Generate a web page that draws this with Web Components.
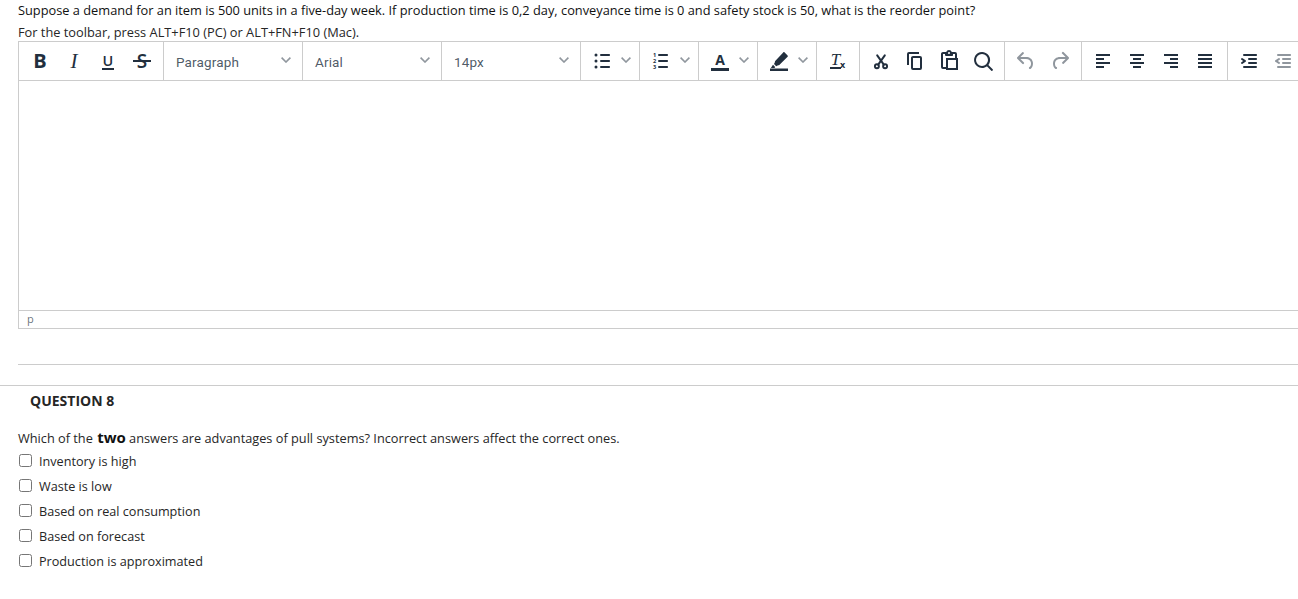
<!DOCTYPE html>
<html lang="en"><head><meta charset="utf-8"><title>Question</title>
<style>
html,body{margin:0;padding:0;background:#fff;overflow:hidden;height:599px;font-family:"Open Sans",sans-serif;color:#111}
</style></head><body>
<question-block></question-block>
<rich-editor></rich-editor>
<section-divider></section-divider>
<question-head>QUESTION 8</question-head>
<question-prompt>Which of the <b>two</b> answers are advantages of pull systems? Incorrect answers affect the correct ones.</question-prompt>
<answer-option>Inventory is high</answer-option>
<answer-option>Waste is low</answer-option>
<answer-option>Based on real consumption</answer-option>
<answer-option>Based on forecast</answer-option>
<answer-option>Production is approximated</answer-option>
<script>
const ICONS={
 bull:'<path d="M11 5h8c.6 0 1 .4 1 1s-.4 1-1 1h-8a1 1 0 010-2zm0 6h8c.6 0 1 .4 1 1s-.4 1-1 1h-8a1 1 0 010-2zm0 6h8c.6 0 1 .4 1 1s-.4 1-1 1h-8a1 1 0 010-2z"/><circle cx="6" cy="6" r="1.5"/><circle cx="6" cy="12" r="1.5"/><circle cx="6" cy="18" r="1.5"/>',
 num:'<path d="M10 17h8c.6 0 1 .4 1 1s-.4 1-1 1h-8a1 1 0 010-2zm0-6h8c.6 0 1 .4 1 1s-.4 1-1 1h-8a1 1 0 010-2zm0-6h8c.6 0 1 .4 1 1s-.4 1-1 1h-8a1 1 0 110-2z"/><g font-family="Open Sans" font-size="5.6" font-weight="700" text-anchor="middle"><text x="5.5" y="8">1</text><text x="5.5" y="14">2</text><text x="5.5" y="20">3</text></g>',
 hl:'<path d="M17.6 3.4l3 3c.4.4.4 1 0 1.4l-8.3 8.2c-.3.3-.8.4-1.2.2l-1.9 1-2.2-2.2 1-1.9c-.2-.4-.1-.9.2-1.2l8-8.5c.4-.4 1-.4 1.4 0z"/><path d="M6 15.8l2.2 2.2-.7.9H3.8z"/><rect x="3" y="19.5" width="18" height="2.5"/>',
 cut:'<g fill="none" stroke="#222f3e" stroke-width="1.9"><circle cx="7.9" cy="17.3" r="2"/><circle cx="16.1" cy="17.3" r="2"/></g><path d="M9.2 15.6L15.8 6.4M14.8 15.6L8.2 6.4" fill="none" stroke="#222f3e" stroke-width="2" stroke-linecap="round"/>',
 copy:'<path d="M16 3H6a2 2 0 00-2 2v11h2V5h10V3zm1 4a2 2 0 012 2v10a2 2 0 01-2 2h-7a2 2 0 01-2-2V9c0-1.2.9-2 2-2h7zm0 12V9h-7v10h7z"/>',
 paste:'<path fill-rule="evenodd" d="M18 9V5h-2v1c0 .6-.4 1-1 1H9a1 1 0 01-1-1V5H6v13h3V9h9zM9 20H6a2 2 0 01-2-2V5c0-1.1.9-2 2-2h3.2A3 3 0 0112 1a3 3 0 012.8 2H18a2 2 0 012 2v4h1v12H9v-1zm2-9v8h8v-8h-8zM12 3a1 1 0 00-1 1c0 .5.4 1 1 1s1-.5 1-1-.4-1-1-1z"/>',
 search:'<path d="M16 17.3a8 8 0 111.4-1.4l4.3 4.4a1 1 0 01-1.4 1.4l-4.4-4.4zm-5-.3a6 6 0 100-12 6 6 0 000 12z"/>',
 undo:'<path d="M6.4 8H12c3.7 0 6.2 2 6.8 5.1.6 2.7-.4 5.6-2.3 6.8a1 1 0 01-1-1.8c1.1-.6 1.8-2.7 1.4-4.6-.5-2.1-2.1-3.5-4.9-3.5H6.4l3.3 3.3a1 1 0 11-1.4 1.4l-5-5a1 1 0 010-1.4l5-5a1 1 0 011.4 1.4L6.4 8z"/>',
 redo:'<path d="M17.6 10H12c-2.8 0-4.4 1.4-4.9 3.5-.4 2 .3 4 1.4 4.6a1 1 0 11-1 1.8c-2-1.2-2.9-4.1-2.3-6.8.6-3 3-5.1 6.8-5.1h5.6l-3.3-3.3a1 1 0 111.4-1.4l5 5a1 1 0 010 1.4l-5 5a1 1 0 01-1.4-1.4l3.3-3.3z"/>',
 al:'<path d="M5 5h14v2H5zM5 9h8v2H5zM5 13h14v2H5zM5 17h8v2H5z"/>',
 ac:'<path d="M5 5h14v2H5zM8 9h8v2H8zM5 13h14v2H5zM8 17h8v2H8z"/>',
 ar:'<path d="M5 5h14v2H5zM11 9h8v2h-8zM5 13h14v2H5zM11 17h8v2h-8z"/>',
 aj:'<path d="M5 5h14v2H5zM5 9h14v2H5zM5 13h14v2H5zM5 17h14v2H5z"/>',
 ind:'<path d="M7 5h12c.6 0 1 .4 1 1s-.4 1-1 1H7a1 1 0 110-2zm5 4h7c.6 0 1 .4 1 1s-.4 1-1 1h-7a1 1 0 010-2zm0 4h7c.6 0 1 .4 1 1s-.4 1-1 1h-7a1 1 0 010-2zm-5 4h12a1 1 0 010 2H7a1 1 0 010-2zm-2.6-3.8L6.2 12l-1.8-1.2a1 1 0 011.2-1.6l3 2a1 1 0 010 1.6l-3 2a1 1 0 11-1.2-1.6z"/>',
 out:'<path d="M7 5h12c.6 0 1 .4 1 1s-.4 1-1 1H7a1 1 0 110-2zm5 4h7c.6 0 1 .4 1 1s-.4 1-1 1h-7a1 1 0 010-2zm0 4h7c.6 0 1 .4 1 1s-.4 1-1 1h-7a1 1 0 010-2zm-5 4h12a1 1 0 010 2H7a1 1 0 010-2zm1.6-3.8a1 1 0 01-1.2 1.6l-3-2a1 1 0 010-1.6l3-2a1 1 0 011.2 1.6L6.8 12l1.8 1.2z"/>'
};
const svg=n=>`<svg width="24" height="24" viewBox="0 0 24 24" fill="#222f3e">${ICONS[n]}</svg>`;
const chev=`<svg width="10" height="6" viewBox="0 0 10 6" fill="none" stroke="#222f3e" stroke-opacity=".5" stroke-width="1.6"><path d="M.6.6L5 5 9.4.6"/></svg>`;
class Base extends HTMLElement{
 render(html){this.attachShadow({mode:'open'}).innerHTML=html}
}
customElements.define('question-block',class extends Base{connectedCallback(){this.render(`<style>
 :host{display:block;padding-left:18px;font-size:12.8px;color:#111}
 p{margin:0;white-space:nowrap}
 .a{height:21px;line-height:21px}.b{height:20px;line-height:23px;color:#262626}
 </style><p class="a">Suppose a demand for an item is 500 units in a five-day week. If production time is 0,2 day, conveyance time is 0 and safety stock is 50, what is the reorder point?</p><p class="b">For the toolbar, press ALT+F10 (PC) or ALT+FN+F10 (Mac).</p>`)}});
customElements.define('tb-icon',class extends Base{connectedCallback(){const n=this.getAttribute('n'),off=this.hasAttribute('off');this.render(`<style>
 :host{display:flex;width:34px;height:38px;align-items:center;justify-content:center;flex:none;${off?'opacity:.5':''}}
 svg{display:block}</style>${svg(n)}`)}});
customElements.define('tb-letter',class extends Base{connectedCallback(){const k=this.getAttribute('k');const s={
 b:'font:700 20px/24px "Open Sans";',
 i:'font:italic 400 21px/24px "Liberation Serif";',
 u:'font:600 14.5px/15px "Open Sans";border-bottom:2px solid #222f3e;padding:0 1px;margin-top:1px;',
 s:'font:600 19px/24px "Open Sans";position:relative;'}[k];
 this.render(`<style>:host{display:flex;width:34px;height:38px;align-items:center;justify-content:center;flex:none;color:#222f3e}
 span{display:block;${s}}
 b{position:absolute;left:-3.5px;right:-3.5px;top:11px;height:1.6px;background:#222f3e}
 </style><span><slot></slot>${k==='s'?'<b></b>':''}</span>`)}});
customElements.define('tb-group',class extends Base{connectedCallback(){const w=this.getAttribute('w');this.render(`<style>
 :host{display:flex;flex:none;box-sizing:border-box;width:${w}px;padding:0 4px;border-right:1px solid #ccc;height:38px}
 :host([last]){border-right:0}</style><slot></slot>`)}});
customElements.define('tb-select',class extends Base{connectedCallback(){this.render(`<style>
 :host{display:flex;flex:none;box-sizing:border-box;width:139px;height:38px;padding:0 11px 0 12px;border-right:1px solid #ccc;align-items:center;justify-content:space-between;font:13.5px Roboto,sans-serif;letter-spacing:.15px;color:rgba(34,47,62,.8)}
 span{padding-top:1px}svg{margin-top:-3px}</style><span><slot></slot></span>${chev}`)}});
customElements.define('tb-split',class extends Base{connectedCallback(){const w=this.getAttribute('w')||59;this.render(`<style>
 :host{display:flex;flex:none;box-sizing:border-box;width:${w}px;height:38px;padding-left:9px;border-right:1px solid #ccc;align-items:center}
 svg{display:block}.c{margin-left:7px;margin-top:-2px}</style><slot></slot><span class="c">${chev}</span>`)}});
customElements.define('tb-swatch',class extends Base{connectedCallback(){this.render(`<style>
 :host{display:flex;flex-direction:column;align-items:center;justify-content:flex-end;width:24px;height:24px;flex:none;color:#222f3e;box-sizing:border-box}
 span{font:700 14px/14px "Open Sans";height:14px}i{display:block;width:18px;height:3px;background:#222f3e;margin:1px 0 2px}
 </style><span><slot></slot></span><i></i>`)}});
customElements.define('tb-plain',class extends Base{connectedCallback(){const n=this.getAttribute('n');this.render(`<style>:host{display:block;width:24px;height:24px;flex:none}svg{display:block}</style>${svg(n)}`)}});
customElements.define('tb-clear',class extends Base{connectedCallback(){this.render(`<style>
 :host{display:flex;flex:none;box-sizing:border-box;width:43px;height:38px;border-right:1px solid #ccc;align-items:center;justify-content:center;color:#222f3e}
 span{display:block;height:15px;position:relative;border-bottom:2px solid #222f3e;width:11px;margin:-1px 5px 0 0;font:italic 17px/15px "Liberation Serif";text-align:center}
 small{position:absolute;left:10px;bottom:-2px;font:700 9px/9px "Open Sans"}
 </style><span>T<small>x</small></span>`)}});
customElements.define('rich-editor',class extends Base{connectedCallback(){this.render(`<style>
 :host{display:block;margin-left:18px;width:1290px;border:1px solid #ccc;border-right:0;box-sizing:border-box;color:#222f3e}
 .bar{display:flex;height:38px;border-bottom:1px solid #ccc;white-space:nowrap}
 .body{height:229px}
 .status{height:17px;border-top:1px solid #ccc;padding-left:8px;font:11px/15px "Open Sans";color:rgba(34,47,62,.7)}
 </style>
 <div class="bar">
  <tb-group w="145"><tb-letter k="b">B</tb-letter><tb-letter k="i">I</tb-letter><tb-letter k="u">U</tb-letter><tb-letter k="s">S</tb-letter></tb-group>
  <tb-select>Paragraph</tb-select><tb-select>Arial</tb-select><tb-select>14px</tb-select>
  <tb-split><tb-plain n="bull"></tb-plain></tb-split>
  <tb-split><tb-plain n="num"></tb-plain></tb-split>
  <tb-split><tb-swatch>A</tb-swatch></tb-split>
  <tb-split><tb-plain n="hl"></tb-plain></tb-split>
  <tb-clear></tb-clear>
  <tb-group w="145"><tb-icon n="cut"></tb-icon><tb-icon n="copy"></tb-icon><tb-icon n="paste"></tb-icon><tb-icon n="search"></tb-icon></tb-group>
  <tb-group w="77"><tb-icon n="undo" off></tb-icon><tb-icon n="redo" off></tb-icon></tb-group>
  <tb-group w="146"><tb-icon n="al"></tb-icon><tb-icon n="ac"></tb-icon><tb-icon n="ar"></tb-icon><tb-icon n="aj"></tb-icon></tb-group>
  <tb-group w="80" last><tb-icon n="ind"></tb-icon><tb-icon n="out" off></tb-icon></tb-group>
 </div>
 <div class="body"></div>
 <div class="status">p</div>`)}});
customElements.define('section-divider',class extends Base{connectedCallback(){this.render(`<style>
 :host{display:block}
 .a{height:0;border-top:1px solid #ccc;margin:35px 0 0 18px}
 .b{height:0;border-top:1px solid #ccc;margin-top:20px}
 </style><div class="a"></div><div class="b"></div>`)}});
customElements.define('question-head',class extends Base{connectedCallback(){this.render(`<style>
 :host{display:block;padding:5px 0 0 30px;font:700 14px/19px "Open Sans";color:#262626;height:19px}
 </style><slot></slot>`)}});
customElements.define('question-prompt',class extends Base{connectedCallback(){this.render(`<style>
 :host{display:block;padding:18px 0 0 18px;font:12.75px/20px "Open Sans";color:#262626;height:20px}
 ::slotted(b){font-size:15px;font-weight:700;color:#111;line-height:1;margin-left:1px}
 </style><slot></slot>`)}});
customElements.define('answer-option',class extends Base{connectedCallback(){this.render(`<style>
 :host{display:flex;align-items:center;height:25px;padding-left:19px;font:12.65px "Open Sans";color:#262626}
 i{display:block;box-sizing:border-box;width:13px;height:13px;border:1px solid #767676;border-radius:2.5px;background:#fff;margin-right:7px}
 </style><i></i><slot></slot>`)}});
</script>
</body></html>
